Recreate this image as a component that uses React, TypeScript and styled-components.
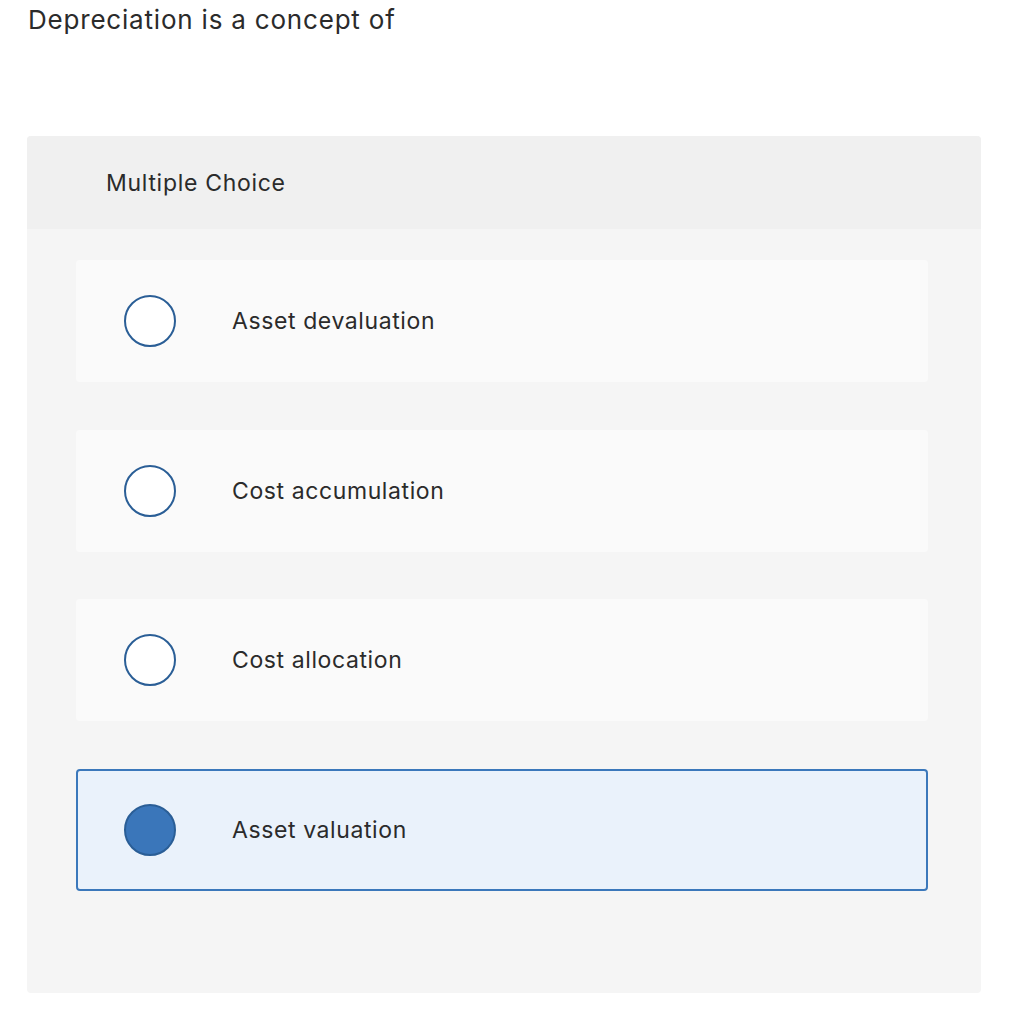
import React from 'react';
import styled, { createGlobalStyle } from 'styled-components';

const GlobalStyle = createGlobalStyle`
  body {
    margin: 0;
    background: #ffffff;
    font-family: Inter, "Open Sans", "Liberation Sans", sans-serif;
    color: #2b2b2b;
  }
`;

const Page = styled.div`
  width: 1010px;
  padding: 0 29px 0 27px;
  box-sizing: border-box;
`;

const Question = styled.h1`
  margin: 0;
  padding: 4px 0 0 1px;
  height: 136px;
  box-sizing: border-box;
  font-size: 26px;
  font-weight: 400;
  line-height: 32px;
  letter-spacing: 0.8px;
  color: #2b2b2b;
`;

const Panel = styled.section`
  background: #f5f5f5;
  border-radius: 4px;
  overflow: hidden;
`;

const PanelHeader = styled.div`
  height: 93px;
  background: #f0f0f0;
  display: flex;
  align-items: center;
  padding: 0 0 0 79px;
  font-size: 23px;
  letter-spacing: 0.7px;
  color: #2b2b2b;
`;

const Options = styled.div`
  display: flex;
  flex-direction: column;
  gap: 47.6px;
  padding: 31px 53px 102px 49px;
`;

const Option = styled.label<{ $selected?: boolean }>`
  height: 122px;
  box-sizing: border-box;
  display: flex;
  align-items: center;
  gap: 56px;
  padding-left: ${(p) => (p.$selected ? '46px' : '48px')};
  border-radius: 4px;
  background: ${(p) => (p.$selected ? '#eaf2fb' : '#fafafa')};
  border: ${(p) => (p.$selected ? '2px solid #3b78bb' : 'none')};
  font-size: 23px;
  letter-spacing: 0.6px;
  color: #2b2b2b;
`;

const Radio = styled.span<{ $checked?: boolean }>`
  width: 52px;
  height: 52px;
  box-sizing: border-box;
  border-radius: 50%;
  border: 2px solid #2a5e96;
  background: ${(p) => (p.$checked ? '#3a76ba' : '#ffffff')};
  flex-shrink: 0;
`;

const choices = [
  { text: 'Asset devaluation', selected: false },
  { text: 'Cost accumulation', selected: false },
  { text: 'Cost allocation', selected: false },
  { text: 'Asset valuation', selected: true },
];

const App: React.FC = () => {
  return (
    <Page>
      <GlobalStyle />
      <Question>Depreciation is a concept of</Question>
      <Panel>
        <PanelHeader>Multiple Choice</PanelHeader>
        <Options>
          {choices.map((c) => (
            <Option key={c.text} $selected={c.selected}>
              <Radio $checked={c.selected} />
              <span>{c.text}</span>
            </Option>
          ))}
        </Options>
      </Panel>
    </Page>
  );
};

export default App;
